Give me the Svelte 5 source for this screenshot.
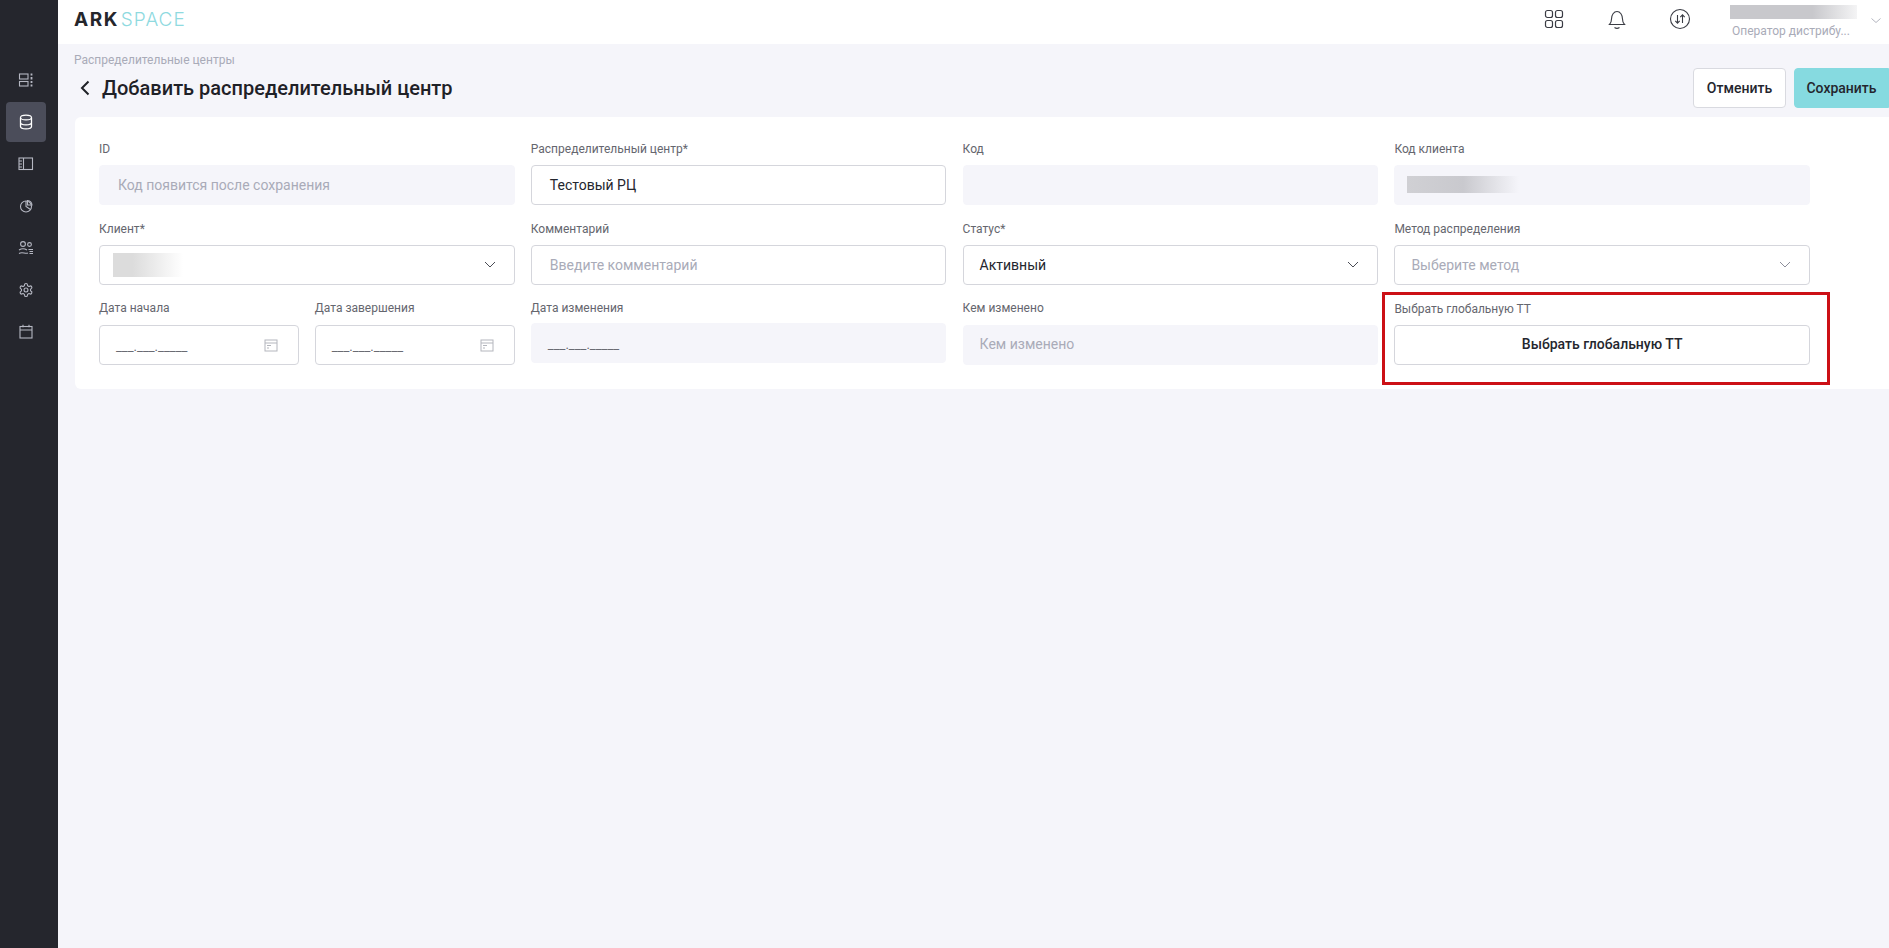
<script>
  const navItems = ['dash', 'db', 'book', 'chart', 'users', 'gear', 'cal'];

  const fields = [
    { label: 'ID', kind: 'muted', text: 'Код появится после сохранения' },
    { label: 'Распределительный центр*', kind: 'value', text: 'Тестовый РЦ' },
    { label: 'Код', kind: 'muted', text: '' },
    { label: 'Код клиента', kind: 'muted', blur: 'blur-code' },
    { label: 'Клиент*', kind: 'select', blur: 'blur-client' },
    { label: 'Комментарий', kind: 'hint', text: 'Введите комментарий' },
    { label: 'Статус*', kind: 'select', text: 'Активный' },
    { label: 'Метод распределения', kind: 'select hint', text: 'Выберите метод' }
  ];
</script>

<div class="app">
  <aside class="sidebar">
    {#each navItems as item, i}
      <div class="nav-item" class:active={i === 1}>
        <svg width="20" height="20" viewBox="0 0 20 20" fill="none" stroke="currentColor" stroke-width="1.1">
          {#if item === 'dash'}
            <rect x="3.500" y="4" width="8.500" height="5" />
            <rect x="3.500" y="11.500" width="8.500" height="4.500" />
            <path d="M15.500 3.500v2M15.500 7v2.500M15.500 11v2M15.500 14.500v2" stroke-width="1.800" />
          {:else if item === 'db'}
            <ellipse cx="10" cy="5.500" rx="5.500" ry="2.400" />
            <path d="M4.500 5.500v9c0 1.400 2.500 2.400 5.500 2.400s5.500-1 5.500-2.400v-9M4.500 10.500c0 1.400 2.500 2.400 5.500 2.400s5.500-1 5.500-2.400" stroke-width="1.300" />
          {:else if item === 'book'}
            <rect x="3" y="4" width="13.500" height="11.500" />
            <path d="M7.500 4v11.500M3 7h3M3 10h3M3 13h3" />
          {:else if item === 'chart'}
            <circle cx="10" cy="10.500" r="5.500" />
            <path d="M10 5v5.500l4.500 3M11.500 4.500a5 5 0 0 1 4.500 4.500h-4.500z" />
          {:else if item === 'users'}
            <circle cx="7" cy="6" r="2.400" />
            <circle cx="13.500" cy="6.500" r="1.900" />
            <path d="M3 12c2.500-1.500 5.500-1.500 8 0M3 15.500c3-2 6 .5 9-.5M12.500 11.500h4.500M13.500 13.500h3.500M13.500 15.500h3.500" />
          {:else if item === 'gear'}
            <g transform="translate(2.200 2.200) scale(.65)" stroke-width="1.700">
              <circle cx="12" cy="12" r="3" />
              <path d="M12.220 2h-.44a2 2 0 0 0-2 2v.18a2 2 0 0 1-1 1.730l-.43.25a2 2 0 0 1-2 0l-.15-.08a2 2 0 0 0-2.730.73l-.22.38a2 2 0 0 0 .73 2.730l.15.1a2 2 0 0 1 1 1.720v.51a2 2 0 0 1-1 1.740l-.15.09a2 2 0 0 0-.73 2.730l.22.38a2 2 0 0 0 2.730.73l.15-.08a2 2 0 0 1 2 0l.43.25a2 2 0 0 1 1 1.730V20a2 2 0 0 0 2 2h.44a2 2 0 0 0 2-2v-.18a2 2 0 0 1 1-1.730l.43-.25a2 2 0 0 1 2 0l.15.08a2 2 0 0 0 2.730-.73l.22-.39a2 2 0 0 0-.73-2.730l-.15-.08a2 2 0 0 1-1-1.740v-.5a2 2 0 0 1 1-1.740l.15-.09a2 2 0 0 0 .73-2.730l-.22-.38a2 2 0 0 0-2.730-.73l-.15.08a2 2 0 0 1-2 0l-.43-.25a2 2 0 0 1-1-1.730V4a2 2 0 0 0-2-2z" />
            </g>
          {:else}
            <rect x="4" y="4.500" width="12" height="11.500" />
            <path d="M4 8h12M7 2.800v2.400M13 2.800v2.400" />
          {/if}
        </svg>
      </div>
    {/each}
  </aside>

  <div class="main">
    <header class="topbar">
      <div class="logo"><b>ARK</b><span>SPACE</span></div>
      <div class="top-actions">
        <svg class="top-icon" width="22" height="22" viewBox="0 0 22 22" fill="none" stroke="#3a3c44" stroke-width="1.200">
          <rect x="2.500" y="2.500" width="7" height="7" rx="2" />
          <rect x="12.500" y="2.500" width="7" height="7" rx="2" />
          <rect x="2.500" y="12.500" width="7" height="7" rx="2" />
          <rect x="12.500" y="12.500" width="7" height="7" rx="2" />
        </svg>
        <svg class="top-icon" width="22" height="22" viewBox="0 0 22 22" fill="none" stroke="#3a3c44" stroke-width="1.100">
          <path d="M3.500 16.500c1.500-1.500 2-2.500 2-5.500 0-4 2.300-7.500 5.500-7.500s5.500 3.500 5.500 7.500c0 3 .5 4 2 5.500z" />
          <path d="M8.500 19.500c1.500 1 3.500 1 5 0" />
        </svg>
        <svg class="top-icon" width="22" height="22" viewBox="0 0 22 22" fill="none" stroke="#3a3c44" stroke-width="1.100">
          <circle cx="11" cy="11" r="9.500" />
          <path d="M8.500 7v8M6.300 12.800l2.200 2.400 2.200-2.400M13.500 15V7M11.300 9.200L13.500 6.800l2.200 2.400" />
        </svg>
        <div class="user">
          <div class="user-blur"></div>
          <div class="user-role">Оператор дистрибу...</div>
        </div>
        <svg class="user-chevron" width="12" height="8" viewBox="0 0 12 8" fill="none" stroke="#b4b6c0" stroke-width="1">
          <path d="M1.500 1.500L6 5.500l4.500-4" />
        </svg>
      </div>
    </header>

    <div class="content">
      <div class="crumb">Распределительные центры</div>
      <div class="head-row">
        <div class="title-wrap">
          <svg width="12" height="18" viewBox="0 0 12 18" fill="none" stroke="#1f2127" stroke-width="2">
            <path d="M9.500 2.500L3 9l6.500 6.500" />
          </svg>
          <h1>Добавить распределительный центр</h1>
        </div>
        <div class="buttons">
          <button class="btn cancel">Отменить</button>
          <button class="btn save">Сохранить</button>
        </div>
      </div>

      <section class="card">
        <div class="form-grid">
          {#each fields as f}
            <div class="field">
              <div class="label">{f.label}</div>
              <div class="control {f.kind}">
                {#if f.blur}<div class={f.blur}></div>{:else}<span>{f.text}</span>{/if}
                {#if f.kind.startsWith('select')}
                  <svg class="chevron" width="14" height="9" viewBox="0 0 14 9" fill="none" stroke="currentColor" stroke-width="1">
                    <path d="M2 2l5 5 5-5" />
                  </svg>
                {/if}
              </div>
            </div>
          {/each}

          <div class="field dates">
            {#each ['Дата начала', 'Дата завершения'] as label}
              <div class="field last">
                <div class="label">{label}</div>
                <div class="control date">
                  <span class="mask">___.___._____</span>
                  <svg width="14" height="14" viewBox="0 0 14 14" fill="none" stroke="#b4b6bd" stroke-width="1">
                    <rect x="1" y="2" width="12" height="11" />
                    <path d="M1 5h12M3 7.500h4M3 10h2" />
                  </svg>
                </div>
              </div>
            {/each}
          </div>

          <div class="field last">
            <div class="label">Дата изменения</div>
            <div class="control muted date changed"><span class="mask">___.___._____</span></div>
          </div>
          <div class="field last">
            <div class="label">Кем изменено</div>
            <div class="control muted by"><span>Кем изменено</span></div>
          </div>
          <div class="field global">
            <div class="label">Выбрать глобальную ТТ</div>
            <button class="control pick">Выбрать глобальную ТТ</button>
            <div class="highlight"></div>
          </div>
        </div>
      </section>
    </div>
  </div>
</div>

<style>
  :global(body) {
    font-family: Roboto, "Noto Sans", sans-serif;
    background: #f5f5fa;
  }

  .app {
    display: flex;
    height: 948px;
    overflow: hidden;
  }

  .sidebar {
    flex: 0 0 58px;
    background: #25262d;
    display: flex;
    flex-direction: column;
    gap: 2px;
    padding: 60px 0 0 6px;
    box-sizing: border-box;
  }

  .nav-item {
    width: 40px;
    height: 40px;
    display: flex;
    align-items: center;
    justify-content: center;
    border-radius: 4px;
    color: #b5b7c2;
  }

  .nav-item.active {
    background: #4b4d5a;
    color: #fff;
  }

  .main {
    flex: 1;
    min-width: 0;
    display: flex;
    flex-direction: column;
  }

  .topbar {
    height: 44px;
    flex: none;
    background: #fff;
    display: flex;
    align-items: center;
    justify-content: space-between;
    padding-left: 16px;
  }

  .logo {
    font-family: Inter, sans-serif;
    font-size: 19px;
    line-height: 1;
    display: flex;
    gap: 2px;
    margin-top: -5px;
  }

  .logo b {
    font-weight: 700;
    letter-spacing: 1.500px;
    color: #25262c;
  }

  .logo span {
    font-weight: 300;
    letter-spacing: 1px;
    color: #8fdadf;
  }

  .top-actions {
    display: flex;
    align-items: center;
    margin-right: 7px;
  }

  .top-icon {
    margin-right: 41px;
    margin-top: -6px;
  }

  .top-icon:nth-child(3) {
    margin-right: 39px;
  }

  .user {
    width: 127px;
    margin-right: 13px;
  }

  .user-blur {
    height: 14px;
    background: linear-gradient(90deg, #c8c8cc 0%, #c8c8cc 65%, #f4f4f5 100%);
  }

  .user-role {
    margin-top: 4px;
    font-size: 12px;
    line-height: 16px;
    color: #a9abb8;
    padding-left: 2px;
    white-space: nowrap;
  }

  .user-chevron {
    margin-top: -2px;
  }

  .content {
    padding-left: 17px;
  }

  .crumb {
    font-size: 12px;
    line-height: 16px;
    color: #a9abb8;
    margin-top: 8px;
    margin-left: -1px;
  }

  .head-row {
    display: flex;
    align-items: center;
    justify-content: space-between;
    height: 40px;
  }

  .title-wrap {
    display: flex;
    align-items: center;
    gap: 11px;
    padding-left: 4px;
  }

  h1 {
    margin: 0;
    font-size: 20px;
    font-weight: 500;
    color: #1f2127;
    line-height: 28px;
  }

  .buttons {
    display: flex;
    gap: 8px;
  }

  .btn {
    height: 40px;
    border-radius: 4px;
    font-family: inherit;
    font-size: 14px;
    font-weight: 500;
    color: #24262e;
    border: 1px solid #d9dae0;
    background: #fff;
    padding: 0;
  }

  .cancel {
    width: 93px;
  }

  .save {
    width: 95px;
    background: #86dae0;
    border-color: #86dae0;
    border-radius: 4px 0 0 4px;
  }

  .card {
    margin-top: 9px;
    height: 272px;
    box-sizing: border-box;
    background: #fff;
    border-radius: 6px 0 0 6px;
    padding: 23px 0 0 24px;
  }

  .form-grid {
    display: grid;
    grid-template-columns: repeat(4, 415.500px);
    column-gap: 16.300px;
  }

  .field {
    position: relative;
    height: 80px;
    min-width: 0;
  }

  .dates {
    display: grid;
    grid-template-columns: 1fr 1fr;
    column-gap: 16px;
  }

  .label {
    font-size: 12px;
    line-height: 16px;
    height: 25px;
    padding-top: 1px;
    box-sizing: border-box;
    color: #65666e;
  }

  .last .label {
    margin-top: -1px;
    height: 26px;
  }

  .control {
    height: 40px;
    box-sizing: border-box;
    display: flex;
    align-items: center;
    justify-content: space-between;
    border: 1px solid #d5d6dc;
    border-radius: 4px;
    background: #fff;
    padding: 0 18px 1px;
    font-size: 14px;
    color: #24262e;
    width: 100%;
  }

  .control.muted {
    background: #f5f5fa;
    border-color: #f5f5fa;
    color: #a9abb8;
  }

  .control.hint {
    color: #a9abb8;
  }

  .control.select {
    padding-left: 16px;
    padding-right: 17px;
  }

  .control.by {
    padding-left: 16px;
    padding-bottom: 2px;
  }

  .chevron {
    color: #4a4c55;
    flex: none;
  }

  .control.hint .chevron {
    color: #8d8f9b;
  }

  .control.date {
    padding: 0 20px 0 16px;
  }

  .changed {
    margin-top: -2px;
  }

  .mask {
    color: #6a6b73;
    font-size: 13px;
    padding-top: 2px;
  }

  .blur-code {
    width: 112px;
    height: 17px;
    margin-left: -6px;
    background: linear-gradient(90deg, #d0d0d4 0%, #c9c9ce 50%, #f5f5fa 100%);
  }

  .blur-client {
    width: 78px;
    height: 24px;
    margin-left: -3px;
    background: linear-gradient(90deg, #dcdcdc 0%, #dcdcdc 25%, #fff 90%);
  }

  .pick {
    justify-content: center;
    padding-bottom: 2px;
    font-family: inherit;
    font-weight: 500;
    color: #24262e;
    cursor: pointer;
  }

  .highlight {
    position: absolute;
    left: -12px;
    top: -8px;
    width: 448px;
    height: 93px;
    box-sizing: border-box;
    border: 3px solid #cc1016;
    pointer-events: none;
  }
</style>
